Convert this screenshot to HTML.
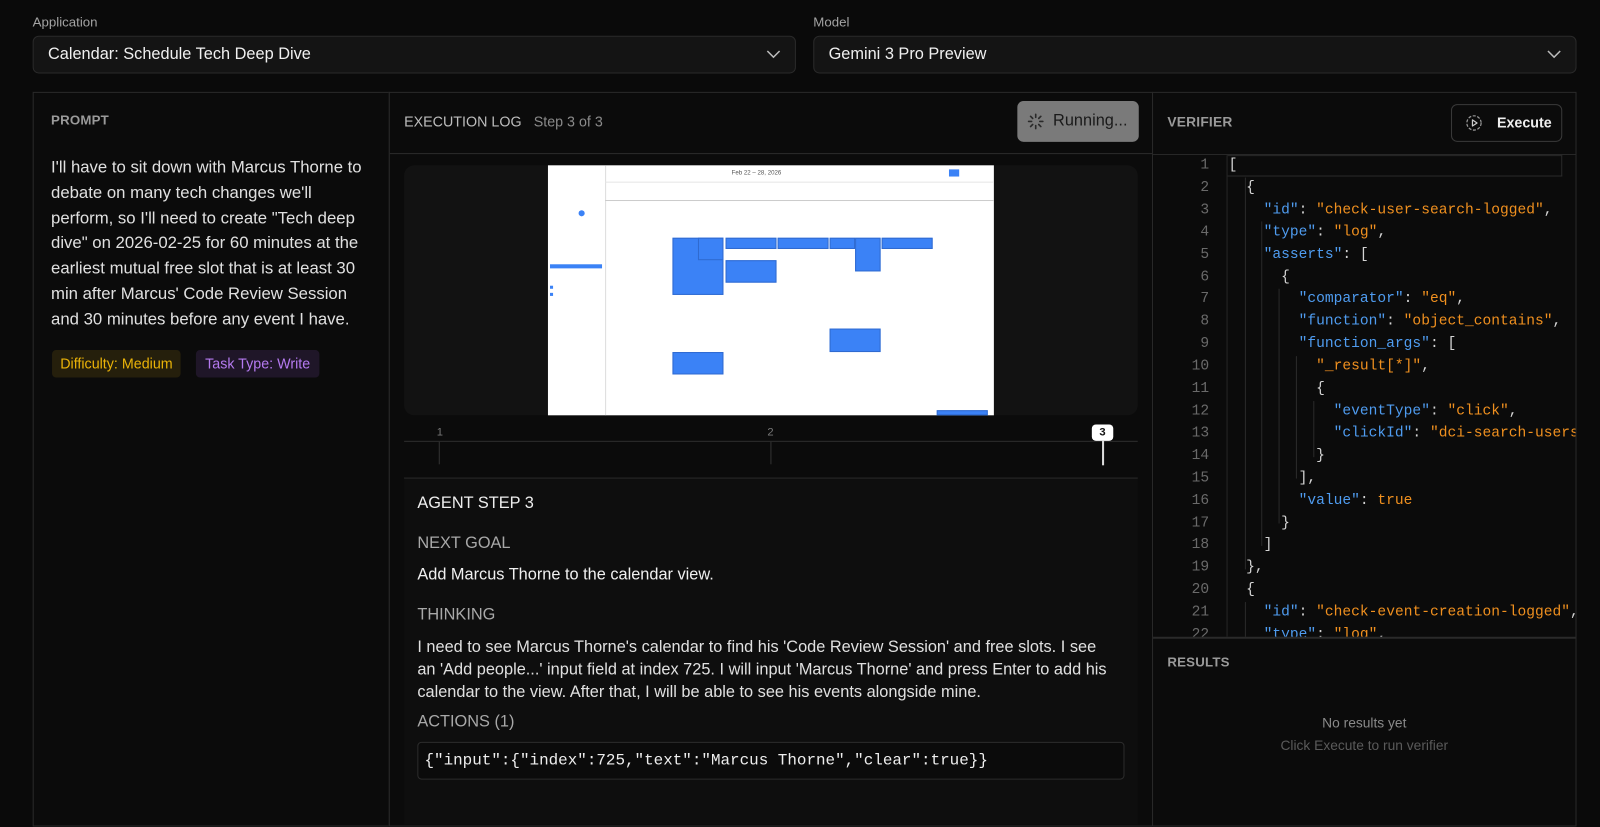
<!DOCTYPE html>
<html><head><meta charset="utf-8"><style>
*{box-sizing:border-box;margin:0;padding:0}
body{width:1600px;height:802px;background:#0a0a0a;font-family:"Liberation Sans",sans-serif;color:#e5e5e5;position:relative;overflow:hidden}
#w{position:absolute;left:0;top:0;width:1568px;height:786px;transform:scale(1.020408);transform-origin:0 0}
.abs{position:absolute}
.lbl{font-size:13px;color:#a3a3a3}
.sel{background:#141414;border:1px solid #2a2a2a;border-radius:6px;height:37px;font-size:16px;color:#f0f0f0;padding:0 14px;line-height:35px}
.chev{position:absolute;right:14px;top:12px}
.panel{border:1px solid #2a2a2a;background:#0b0b0b}
.h{font-size:13px;font-weight:bold;color:#9a9a9a;letter-spacing:.2px}
.code{font-family:"Liberation Mono",monospace;font-size:14.3px;line-height:21.9px;white-space:pre}
.k{color:#4f9cf0}.s{color:#f0901f}.p{color:#d4d4d4}
.ev{position:absolute;background:#3b82f6;border:1px solid #2f6ad0}
</style></head><body><div id="w">
<div class="abs lbl" style="left:32px;top:14px">Application</div>
<div class="abs sel" style="left:32px;top:35px;width:748px">Calendar: Schedule Tech Deep Dive<svg class="chev" width="14" height="10" viewBox="0 0 14 10"><path d="M1 2l6 6 6-6" stroke="#bbb" stroke-width="1.5" fill="none"/></svg></div>
<div class="abs lbl" style="left:797px;top:14px">Model</div>
<div class="abs sel" style="left:797px;top:35px;width:748px">Gemini 3 Pro Preview<svg class="chev" width="14" height="10" viewBox="0 0 14 10"><path d="M1 2l6 6 6-6" stroke="#bbb" stroke-width="1.5" fill="none"/></svg></div>

<div class="abs panel" style="left:32px;top:90px;width:350px;height:720px"></div>
<div class="abs h" style="left:50px;top:110px">PROMPT</div>
<div class="abs" style="left:50px;top:152px;font-size:16.4px;line-height:24.8px;color:#e0e0e0;white-space:nowrap">I'll have to sit down with Marcus Thorne to<br>debate on many tech changes we'll<br>perform, so I'll need to create "Tech deep<br>dive" on 2026-02-25 for 60 minutes at the<br>earliest mutual free slot that is at least 30<br>min after Marcus' Code Review Session<br>and 30 minutes before any event I have.</div>
<div class="abs" style="left:51px;top:343px;height:27px;padding:0 8px;line-height:27px;background:#251f0c;border-radius:4px;color:#eab308;font-size:14px">Difficulty: Medium</div>
<div class="abs" style="left:192px;top:343px;height:27px;padding:0 9px;line-height:27px;background:#1f1628;border-radius:4px;color:#b57af0;font-size:14px">Task Type: Write</div>

<div class="abs panel" style="left:381px;top:90px;width:749px;height:720px"></div>
<div class="abs" style="left:382px;top:150px;width:747px;height:1px;background:#2a2a2a"></div>
<div class="abs" style="left:396px;top:111px;font-size:14px;color:#bdbdbd">EXECUTION LOG <span style="color:#8a8a8a;margin-left:8px">Step 3 of 3</span></div>
<div class="abs" style="left:997px;top:99px;width:119px;height:40px;background:#7a7a7a;border-radius:6px;font-size:16px;color:#1a1a1a;line-height:40px;padding-left:35px">Running...
<svg class="abs" style="left:9px;top:11px" width="18" height="18" viewBox="0 0 18 18" stroke="#2a2a2a" stroke-width="1.6" stroke-linecap="round"><path d="M9 2v3M9 13v3M2 9h3M13 9h3M4 4l2 2M12 12l2 2M4 14l2-2M12 6l2-2"/></svg></div>
<div class="abs" style="left:396px;top:162px;width:719px;height:245px;background:#121212;border-radius:10px"></div>
<div class="abs" style="left:537px;top:162px;width:437px;height:245px;background:#fff;overflow:hidden">
 <div class="abs" style="left:56px;top:0;width:1px;height:245px;background:#ddd"></div>
 <div class="abs" style="left:56px;top:16px;width:381px;height:1px;background:#e5e5e5"></div>
 <div class="abs" style="left:56px;top:34px;width:381px;height:1px;background:#ccc"></div>
 <div class="abs" style="left:180px;top:5px;font-size:6px;color:#555">Feb 22 – 28, 2026</div>
 <div class="abs" style="left:393px;top:4px;width:10px;height:7px;background:#3b82f6"></div>
 <div class="abs" style="left:2px;top:97px;width:51px;height:4px;background:#3b82f6"></div>
 <div class="abs" style="left:30px;top:44px;width:6px;height:6px;border-radius:3px;background:#3b82f6"></div>
 <div class="abs" style="left:2px;top:118px;width:3px;height:3px;background:#3b82f6"></div>
 <div class="abs" style="left:2px;top:125px;width:3px;height:3px;background:#3b82f6"></div>
</div>
<div class="ev" style="left:659px;top:233px;width:50px;height:56px"></div>
<div class="ev" style="left:684px;top:233px;width:25px;height:22px"></div>
<div class="ev" style="left:711px;top:233px;width:50px;height:11px"></div>
<div class="ev" style="left:711px;top:255px;width:50px;height:22px"></div>
<div class="ev" style="left:762px;top:233px;width:50px;height:11px"></div>
<div class="ev" style="left:813px;top:233px;width:25px;height:11px"></div>
<div class="ev" style="left:838px;top:233px;width:25px;height:33px"></div>
<div class="ev" style="left:864px;top:233px;width:50px;height:11px"></div>
<div class="ev" style="left:813px;top:322px;width:50px;height:23px"></div>
<div class="ev" style="left:659px;top:345px;width:50px;height:22px"></div>
<div class="ev" style="left:918px;top:402px;width:50px;height:5px"></div>
<div class="abs" style="left:396px;top:432px;width:719px;height:1px;background:#2e2e2e"></div>
<div class="abs" style="left:428px;top:418px;font-size:11px;color:#777">1</div>
<div class="abs" style="left:430px;top:433px;width:1px;height:22px;background:#333"></div>
<div class="abs" style="left:752px;top:418px;font-size:11px;color:#777">2</div>
<div class="abs" style="left:755px;top:433px;width:1px;height:22px;background:#333"></div>
<div class="abs" style="left:1070px;top:416px;width:21px;height:16px;background:#fff;border-radius:4px;color:#111;font-size:11px;font-weight:bold;text-align:center;line-height:16px">3</div>
<div class="abs" style="left:1080px;top:432px;width:1.5px;height:24px;background:#ddd"></div>
<div class="abs" style="left:396px;top:468px;width:719px;height:340px;background:#0e0e0e;border-top:1px solid #2a2a2a"></div>
<div class="abs" style="left:409px;top:485px;font-size:16px;color:#eee">AGENT STEP 3</div>
<div class="abs" style="left:409px;top:524px;font-size:16px;color:#a8a8a8">NEXT GOAL</div>
<div class="abs" style="left:409px;top:555px;font-size:16px;color:#f0f0f0">Add Marcus Thorne to the calendar view.</div>
<div class="abs" style="left:409px;top:594px;font-size:16px;color:#a8a8a8">THINKING</div>
<div class="abs" style="left:409px;top:624px;font-size:16px;line-height:22px;color:#e0e0e0;white-space:nowrap">I need to see Marcus Thorne's calendar to find his 'Code Review Session' and free slots. I see<br>an 'Add people...' input field at index 725. I will input 'Marcus Thorne' and press Enter to add his<br>calendar to the view. After that, I will be able to see his events alongside mine.</div>
<div class="abs" style="left:409px;top:699px;font-size:16px;color:#a8a8a8">ACTIONS (1)</div>
<div class="abs code" style="left:409px;top:727px;width:693px;height:37px;border:1px solid #2c2c2c;border-radius:4px;background:#0b0b0b;font-size:15.6px;line-height:35px;padding-left:6px;color:#eee">{"input":{"index":725,"text":"Marcus Thorne","clear":true}}</div>

<div class="abs panel" style="left:1129px;top:90px;width:416px;height:720px"></div>
<div class="abs" style="left:1130px;top:151px;width:414px;height:1px;background:#2a2a2a"></div>
<div class="abs h" style="left:1144px;top:112px;font-size:13.5px">VERIFIER</div>
<div class="abs" style="left:1422px;top:102px;width:109px;height:37px;border:1px solid #3a3a3a;border-radius:6px;font-size:14px;font-weight:bold;color:#eee;line-height:35px;padding-left:44px">Execute
<svg class="abs" style="left:13px;top:9px" width="17" height="17" viewBox="0 0 17 17"><circle cx="8.5" cy="8.5" r="7" stroke="#999" stroke-width="1.2" fill="none" stroke-dasharray="3 1.5"/><path d="M7 5.5v6l4.5-3z" stroke="#ccc" stroke-width="1.2" fill="none" stroke-linejoin="round"/></svg></div>
<div class="abs" style="left:1130px;top:152px;width:414px;height:472px;overflow:hidden;background:#0b0b0b">
 <div class="abs" style="left:72px;top:0;width:1px;height:472px;background:#262626"></div>
 <div class="abs" style="left:73px;top:0;width:328px;height:21px;border:1px solid #2a2a2a;border-left:none"></div>
 <div class="abs code" style="left:0;top:0;width:55px;text-align:right;color:#6a6a6a">1
2
3
4
5
6
7
8
9
10
11
12
13
14
15
16
17
18
19
20
21
22</div>
 <div class="abs code p" style="left:74px;top:0">[
  {
    <span class="k">"id"</span>: <span class="s">"check-user-search-logged"</span>,
    <span class="k">"type"</span>: <span class="s">"log"</span>,
    <span class="k">"asserts"</span>: [
      {
        <span class="k">"comparator"</span>: <span class="s">"eq"</span>,
        <span class="k">"function"</span>: <span class="s">"object_contains"</span>,
        <span class="k">"function_args"</span>: [
          <span class="s">"_result[*]"</span>,
          {
            <span class="k">"eventType"</span>: <span class="s">"click"</span>,
            <span class="k">"clickId"</span>: <span class="s">"dci-search-users-input"</span>
          }
        ],
        <span class="k">"value"</span>: <span class="s">true</span>
      }
    ]
  },
  {
    <span class="k">"id"</span>: <span class="s">"check-event-creation-logged"</span>,
    <span class="k">"type"</span>: <span class="s">"log"</span>,</div>
 <div class="abs" style="left:90px;top:22px;width:1px;height:384px;background:#2a2a2a"></div>
 <div class="abs" style="left:106px;top:65px;width:1px;height:318px;background:#2a2a2a"></div>
 <div class="abs" style="left:123px;top:131px;width:1px;height:230px;background:#2a2a2a"></div>
 <div class="abs" style="left:140px;top:197px;width:1px;height:120px;background:#2a2a2a"></div>
 <div class="abs" style="left:157px;top:241px;width:1px;height:55px;background:#2a2a2a"></div>
 <div class="abs" style="left:90px;top:438px;width:1px;height:40px;background:#2a2a2a"></div>
</div>
<div class="abs" style="left:1130px;top:624px;width:414px;height:2px;background:#2a2a2a"></div>
<div class="abs h" style="left:1144px;top:641px">RESULTS</div>
<div class="abs" style="left:1130px;top:701px;width:414px;text-align:center;font-size:13.5px;color:#8a8a8a">No results yet</div>
<div class="abs" style="left:1130px;top:723px;width:414px;text-align:center;font-size:13.5px;color:#5a5a5a">Click Execute to run verifier</div>
</div></body></html>
